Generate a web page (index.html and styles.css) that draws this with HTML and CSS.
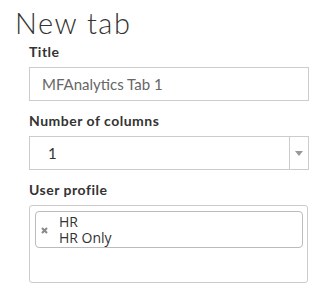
FILE: index.html
```html
<!DOCTYPE html>
<html lang="en">
<head>
    <meta charset="UTF-8">
    <title>New tab</title>
    <link rel="stylesheet" href="styles.css">
</head>
<body>
    <h1 class="page-title">New tab</h1>

    <div class="form">
        <div class="field">
            <label class="field-label">Title</label>
            <div class="text-input">MFAnalytics Tab 1</div>
        </div>

        <div class="field">
            <label class="field-label">Number of columns</label>
            <div class="select">
                <span class="select-value">1</span>
                <span class="select-arrow"></span>
            </div>
        </div>

        <div class="field">
            <label class="field-label">User profile</label>
            <div class="multi-select">
                <div class="chip">
                    <span class="chip-remove">
                        <svg width="7" height="7" viewBox="0 0 7 7">
                            <path d="M1 1 L6 6 M6 1 L1 6" stroke="#888" stroke-width="2" />
                        </svg>
                    </span>
                    <span class="chip-text">HR<br>HR Only</span>
                </div>
            </div>
        </div>
    </div>
</body>
</html>
```

FILE: styles.css
```css
* {
    margin: 0;
    padding: 0;
    box-sizing: border-box;
}

body {
    font-family: 'Lato', 'Open Sans', sans-serif;
    color: #333;
    background: white;
    padding: 6px 0 0 15px;
}

.page-title {
    font-size: 29px;
    font-weight: 300;
    letter-spacing: 1.5px;
    line-height: 34px;
    color: #333;
}

.form {
    width: 280px;
    margin-left: 14px;
    padding-top: 3px;
}

.field {
    margin-bottom: 11px;
}

.field-label {
    display: block;
    font-size: 14px;
    font-weight: bold;
    letter-spacing: 0.5px;
    line-height: 17px;
    margin-bottom: 7px;
}

.text-input {
    height: 34px;
    border: 1px solid #ccc;
    padding: 0 12px;
    font-size: 15px;
    line-height: 32px;
    color: #666;
}

.select {
    display: flex;
    height: 34px;
    border: 1px solid #ccc;
}

.select-value {
    flex: 1;
    padding-left: 18px;
    font-size: 15px;
    line-height: 32px;
    color: #333;
}

.select-arrow {
    width: 19px;
    border-left: 1px solid #ccc;
    position: relative;
}

.select-arrow::after {
    content: '';
    position: absolute;
    left: 5px;
    top: 14px;
    border-left: 4px solid transparent;
    border-right: 4px solid transparent;
    border-top: 5px solid #999;
}

.multi-select {
    height: 78px;
    width: 279px;
    border: 1px solid #ccc;
    border-radius: 3px;
    padding: 5px 4px 0 5px;
}

.chip {
    display: flex;
    align-items: center;
    height: 37px;
    border: 1px solid #bbb;
    border-radius: 4px;
    background: #fff;
}

.chip-remove {
    display: flex;
    width: 23px;
    padding: 1px 0 0 5px;
}

.chip-text {
    font-family: 'Open Sans', 'Lato', sans-serif;
    font-size: 14px;
    line-height: 15.5px;
    color: #333;
}
```
